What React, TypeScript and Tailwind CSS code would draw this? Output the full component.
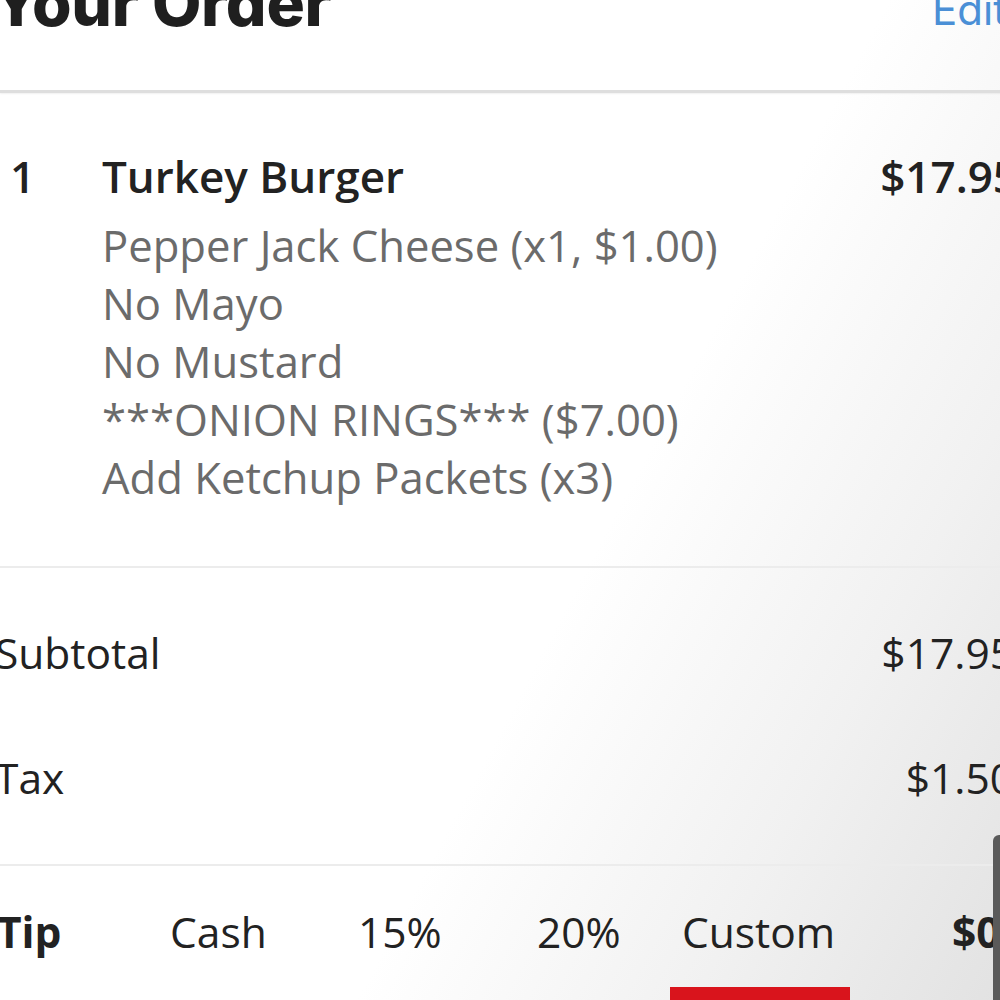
import React from "react";

const sans = { fontFamily: '"Open Sans", "Noto Sans", sans-serif' };
const head = { fontFamily: 'Inter, "Open Sans", sans-serif' };

export default function App() {
  return (
    <div
      className="relative w-[1000px] h-[1000px] overflow-hidden"
      style={{ background: "linear-gradient(118deg, #ffffff 0%, #ffffff 58%, #f1f1f1 80%, #e2e2e2 100%)" }}
    >
      <div className="flex flex-col w-[1018px]" style={sans}>
        {/* header */}
        <div className="flex h-[90px]">
          <div className="flex-none w-[940px] -mt-[29px] -ml-[8px] text-[64px] font-extrabold leading-none text-[#1f1f1f] tracking-[-0.3px]" style={head}>
            Your Order
          </div>
          <div className="flex-none -mt-[11px] text-[42px] leading-none text-[#4a8fd6]" style={head}>Edit</div>
        </div>
        <div className="h-[3px] bg-[#dedede] shadow-[0_1px_2px_rgba(0,0,0,0.06)]" />

        {/* item */}
        <div className="flex pt-[61px] pb-[60px] border-b-2 border-[#ececec]">
          <div className="flex-none w-[102px] pl-[10px] text-[44px] font-semibold text-[#222] leading-[44px]">1</div>
          <div className="flex-1 flex flex-col">
            <div className="text-[44px] font-semibold text-[#222] leading-[44px]">Turkey Burger</div>
            <div className="mt-[18px] flex flex-col text-[43.6px] leading-[58px] text-[#6b6b6b]">
              <span>Pepper Jack Cheese (x1, $1.00)</span>
              <span>No Mayo</span>
              <span>No Mustard</span>
              <span>***ONION RINGS*** ($7.00)</span>
              <span>Add Ketchup Packets (x3)</span>
            </div>
          </div>
          <div className="flex-none text-[44px] font-semibold text-[#222] leading-[44px]">$17.95</div>
        </div>

        {/* totals */}
        <div className="flex flex-col pt-[63px] pb-[64px] gap-[81px] border-b-2 border-[#ececec] text-[42.5px] leading-[44px] text-[#222]">
          <div className="flex justify-between pr-[4px]">
            <span className="-ml-[5px]">Subtotal</span>
            <span>$17.95</span>
          </div>
          <div className="flex justify-between pr-[4px]">
            <span className="-ml-[5px]">Tax</span>
            <span>$1.50</span>
          </div>
        </div>

        {/* tip */}
        <div className="flex pt-[44px] text-[42.5px] leading-[44px] text-[#222]">
          <span className="flex-none w-[173px] font-bold -ml-[3px]">Tip</span>
          <span className="flex-none w-[188px]">Cash</span>
          <span className="flex-none w-[179px]">15%</span>
          <span className="flex-none w-[133px]">20%</span>
          <div className="relative flex-none w-[282px] flex">
            <span className="pl-[12px]">Custom</span>
            <div className="absolute left-0 w-[180px] top-[77px] h-[13px] bg-[#d9141c]" />
          </div>
          <span className="flex-none font-bold">$0.00</span>
        </div>
      </div>
      <div className="absolute right-0 top-[835px] w-[7px] h-[165px] bg-[#5a5a5a] rounded-tl-[6px]" />
    </div>
  );
}
